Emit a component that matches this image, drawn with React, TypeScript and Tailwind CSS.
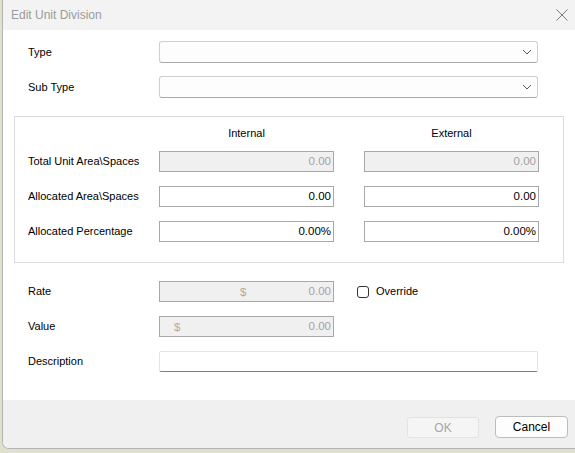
const font = { fontFamily: '"Liberation Sans", Arial, sans-serif' };

function Chevron() {
  return (
    <svg className="w-[10px] h-[6px]" viewBox="0 0 10 6" fill="none" stroke="#5a5a5a" strokeWidth="1">
      <path d="M1 1l4 4 4-4" />
    </svg>
  );
}

function Combo() {
  return (
    <div className="w-[379px] h-[22px] rounded-[3px] border border-[#cfcfcf] border-b-[#a8a8a8] bg-[#fdfdfd] flex items-center justify-end pr-[5px]">
      <Chevron />
    </div>
  );
}

function NumBox({ value, disabled, prefix, prefixAt }: { value: string; disabled?: boolean; prefix?: string; prefixAt?: string }) {
  return (
    <div
      className={`relative w-[175px] h-[21px] border border-[#a8a8a8] flex items-center justify-end pr-[2px] text-[11.5px] ${
        disabled ? "bg-[#f0f0f0] text-[#a3a3a3]" : "bg-white text-black"
      }`}
    >
      {prefix && (
        <span className={`absolute top-[2px] text-[#b8a898] ${prefixAt}`}>{prefix}</span>
      )}
      {value}
    </div>
  );
}

function Row({ label, children, className }: { label: string; children: React.ReactNode; className?: string }) {
  return (
    <div className={`flex items-center ${className ?? ""}`}>
      <div className="w-[131px] text-[11px] text-black">{label}</div>
      {children}
    </div>
  );
}

export default function App() {
  return (
    <div className="w-[575px] h-[453px] bg-[#dfe1cc] overflow-hidden" style={font}>
      <div className="ml-[2px] w-[573px] h-[449px] flex flex-col bg-white border-l border-b border-[#b4b4b4] rounded-bl-[7px] overflow-hidden">
        {/* Title bar */}
        <div className="h-[30px] shrink-0 bg-[#f3f3f3] flex items-center justify-between pl-[8px] pr-[7px]">
          <span className="text-[12px] text-[#9b9b9b]">Edit Unit Division</span>
          <svg className="w-[12px] h-[12px]" viewBox="0 0 12 12" stroke="#7a7a7a" strokeWidth="1">
            <path d="M0.5 0.5l11 11M11.5 0.5l-11 11" />
          </svg>
        </div>

        {/* Body */}
        <div className="flex-1 pl-[25px]">
          <Row label="Type" className="mt-[11px]">
            <Combo />
          </Row>
          <Row label="Sub Type" className="mt-[13px]">
            <Combo />
          </Row>

          {/* Group box */}
          <div className="-ml-[14px] mt-[18px] w-[550px] h-[147px] border border-[#dcdcdc] pl-[13px]">
            <div className="flex h-[33px] items-center text-[11px] text-black">
              <div className="w-[131px]" />
              <div className="w-[175px] text-center">Internal</div>
              <div className="w-[30px]" />
              <div className="w-[175px] text-center">External</div>
            </div>
            <Row label="Total Unit Area\Spaces" className="mt-[1px]">
              <NumBox value="0.00" disabled />
              <div className="w-[30px]" />
              <NumBox value="0.00" disabled />
            </Row>
            <Row label="Allocated Area\Spaces" className="mt-[14px]">
              <NumBox value="0.00" />
              <div className="w-[30px]" />
              <NumBox value="0.00" />
            </Row>
            <Row label="Allocated Percentage" className="mt-[14px]">
              <NumBox value="0.00%" />
              <div className="w-[30px]" />
              <NumBox value="0.00%" />
            </Row>
          </div>

          <Row label="Rate" className="mt-[18px]">
            <NumBox value="0.00" disabled prefix="$" prefixAt="left-[80px]" />
            <div className="ml-[23px] w-[12px] h-[12px] rounded-[3px] border border-[#333333]" />
            <span className="ml-[7px] text-[11px] text-black">Override</span>
          </Row>
          <Row label="Value" className="mt-[14px]">
            <NumBox value="0.00" disabled prefix="$" prefixAt="left-[14px]" />
          </Row>
          <Row label="Description" className="mt-[14px]">
            <div className="w-[379px] h-[21px] rounded-[2px] border border-[#e4e4e4] border-b-[#7f7f7f] bg-white" />
          </Row>
        </div>

        {/* Footer */}
        <div className="h-[48px] shrink-0 bg-[#f0f0f0] flex items-start justify-end gap-[16px] pt-[17px] pr-[7px]">
          <div className="w-[72px] h-[21px] rounded-[3px] border border-[#e3e3e3] bg-[#f5f5f5] text-[12px] text-[#a6a6a6] flex items-center justify-center">
            OK
          </div>
          <div className="w-[73px] h-[22px] -mt-[1px] rounded-[4px] border border-[#bcbcbc] bg-[#fdfdfd] text-[12px] text-black flex items-center justify-center">
            Cancel
          </div>
        </div>
      </div>
    </div>
  );
}
